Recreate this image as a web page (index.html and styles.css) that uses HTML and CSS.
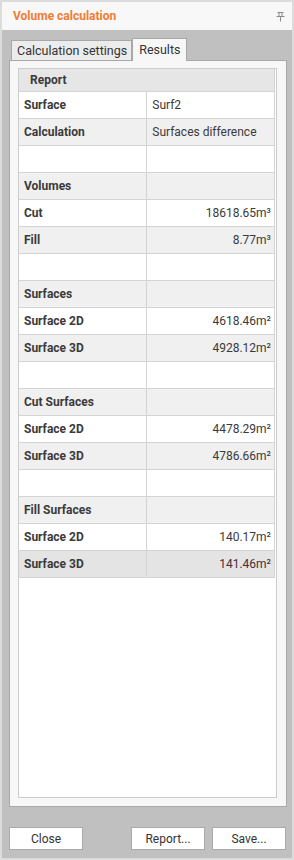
FILE: index.html
```html
<!DOCTYPE html>
<html lang="en">

<head>
    <meta charset="UTF-8">
    <title>Volume calculation</title>
    <link rel="stylesheet" href="styles.css">
</head>

<body>
    <div class="panel">
        <div class="titlebar">
            <span class="title">Volume calculation</span>
            <svg class="pin" width="9" height="10" viewBox="0 0 9 10">
                <path d="M1.5 0.5h6M3 0.5v4M6 0.5v4M0.5 4.5h8M4.5 4.5v5" stroke="#8a8a8a" stroke-width="1" fill="none" />
            </svg>
        </div>
        <div class="content">
            <div class="tabs">
                <div class="tab">Calculation settings</div>
                <div class="tab active">Results</div>
            </div>
            <div class="pane">
                <div class="report">
                    <table class="grid">
                        <tr class="head"><td colspan="2">Report</td></tr>
                        <tr><td>Surface</td><td>Surf2</td></tr>
                        <tr class="alt"><td>Calculation</td><td>Surfaces difference</td></tr>
                        <tr><td></td><td></td></tr>
                        <tr class="alt"><td>Volumes</td><td></td></tr>
                        <tr><td>Cut</td><td class="num">18618.65m³</td></tr>
                        <tr class="alt"><td>Fill</td><td class="num">8.77m³</td></tr>
                        <tr><td></td><td></td></tr>
                        <tr class="alt"><td>Surfaces</td><td></td></tr>
                        <tr><td>Surface 2D</td><td class="num">4618.46m²</td></tr>
                        <tr class="alt"><td>Surface 3D</td><td class="num">4928.12m²</td></tr>
                        <tr><td></td><td></td></tr>
                        <tr class="alt"><td>Cut Surfaces</td><td></td></tr>
                        <tr><td>Surface 2D</td><td class="num">4478.29m²</td></tr>
                        <tr class="alt"><td>Surface 3D</td><td class="num">4786.66m²</td></tr>
                        <tr><td></td><td></td></tr>
                        <tr class="alt"><td>Fill Surfaces</td><td></td></tr>
                        <tr><td>Surface 2D</td><td class="num">140.17m²</td></tr>
                        <tr class="selected"><td>Surface 3D</td><td class="num">141.46m²</td></tr>
                    </table>
                </div>
            </div>
            <div class="buttons">
                <button class="btn">Close</button>
                <span class="spacer"></span>
                <button class="btn">Report...</button>
                <button class="btn">Save...</button>
            </div>
        </div>
    </div>
</body>

</html>
```

FILE: styles.css
```css
body {
    margin: 0;
    font-family: Roboto, "Liberation Sans", sans-serif;
    font-size: 12px;
    color: #3a3a3a;
}

.panel {
    width: 290px;
    height: 856px;
    border: 2px solid #dcdcdc;
    background-color: #c0c0c0;
    display: flex;
    flex-direction: column;
}

.titlebar {
    height: 28px;
    background-color: #f8f8f8;
    display: flex;
    align-items: center;
    padding: 0 7px 0 11px;
}

.title {
    flex: 1;
    color: #f27c34;
    font-weight: bold;
    font-size: 12px;
}

.pin {
    margin-top: 1px;
}

.content {
    flex: 1;
    display: flex;
    flex-direction: column;
    padding: 8px 5px 8px 7px;
}

.tabs {
    display: flex;
    align-items: flex-end;
    padding-left: 2px;
    height: 22px;
}

.tab {
    background-color: #ececec;
    border: 1px solid #a8a8a8;
    border-bottom: none;
    height: 19px;
    line-height: 20px;
    padding: 0 4px 0 5px;
    font-size: 12.5px;
    color: #333;
}

.tab.active {
    background-color: #f7f7f7;
    height: 22px;
    line-height: 21px;
    padding: 0 6px;
    margin-bottom: -1px;
    position: relative;
    z-index: 1;
}

.pane {
    flex: 1;
    background-color: #f7f7f7;
    border: 1px solid #a8a8a8;
    padding: 7px 9px 8px 8px;
    display: flex;
}

.report {
    flex: 1;
    background-color: #fff;
    border: 1px solid #cccccc;
    padding-right: 1px;
}

.grid {
    width: 100%;
    border-collapse: collapse;
    table-layout: fixed;
}

.grid td {
    height: 26px;
    border: 1px solid #d4d4d4;
    padding: 0 5px;
    white-space: nowrap;
    overflow: hidden;
}

.grid tr:first-child td {
    border-top: none;
}

.grid td:first-child {
    border-left: none;
    font-weight: bold;
}

.grid td.num {
    text-align: right;
    padding-right: 3px;
}

.grid tr.head td {
    height: 22px;
    background-color: #e6e6e6;
    padding-left: 11px;
}

.grid tr.alt td {
    background-color: #f0f0f0;
}

.grid tr.selected td {
    background-color: #e4e4e4;
}

.grid tr.selected td.num {
    color: #4a2e36;
}

.buttons {
    display: flex;
    gap: 7px;
    padding-top: 20px;
    padding-right: 1px;
}

.spacer {
    flex: 1;
}

.btn {
    width: 74px;
    height: 23px;
    background-color: #fff;
    border: 1px solid #aaaaaa;
    font-family: Roboto, "Liberation Sans", sans-serif;
    font-size: 12px;
    color: #333;
    padding: 0;
}
```
